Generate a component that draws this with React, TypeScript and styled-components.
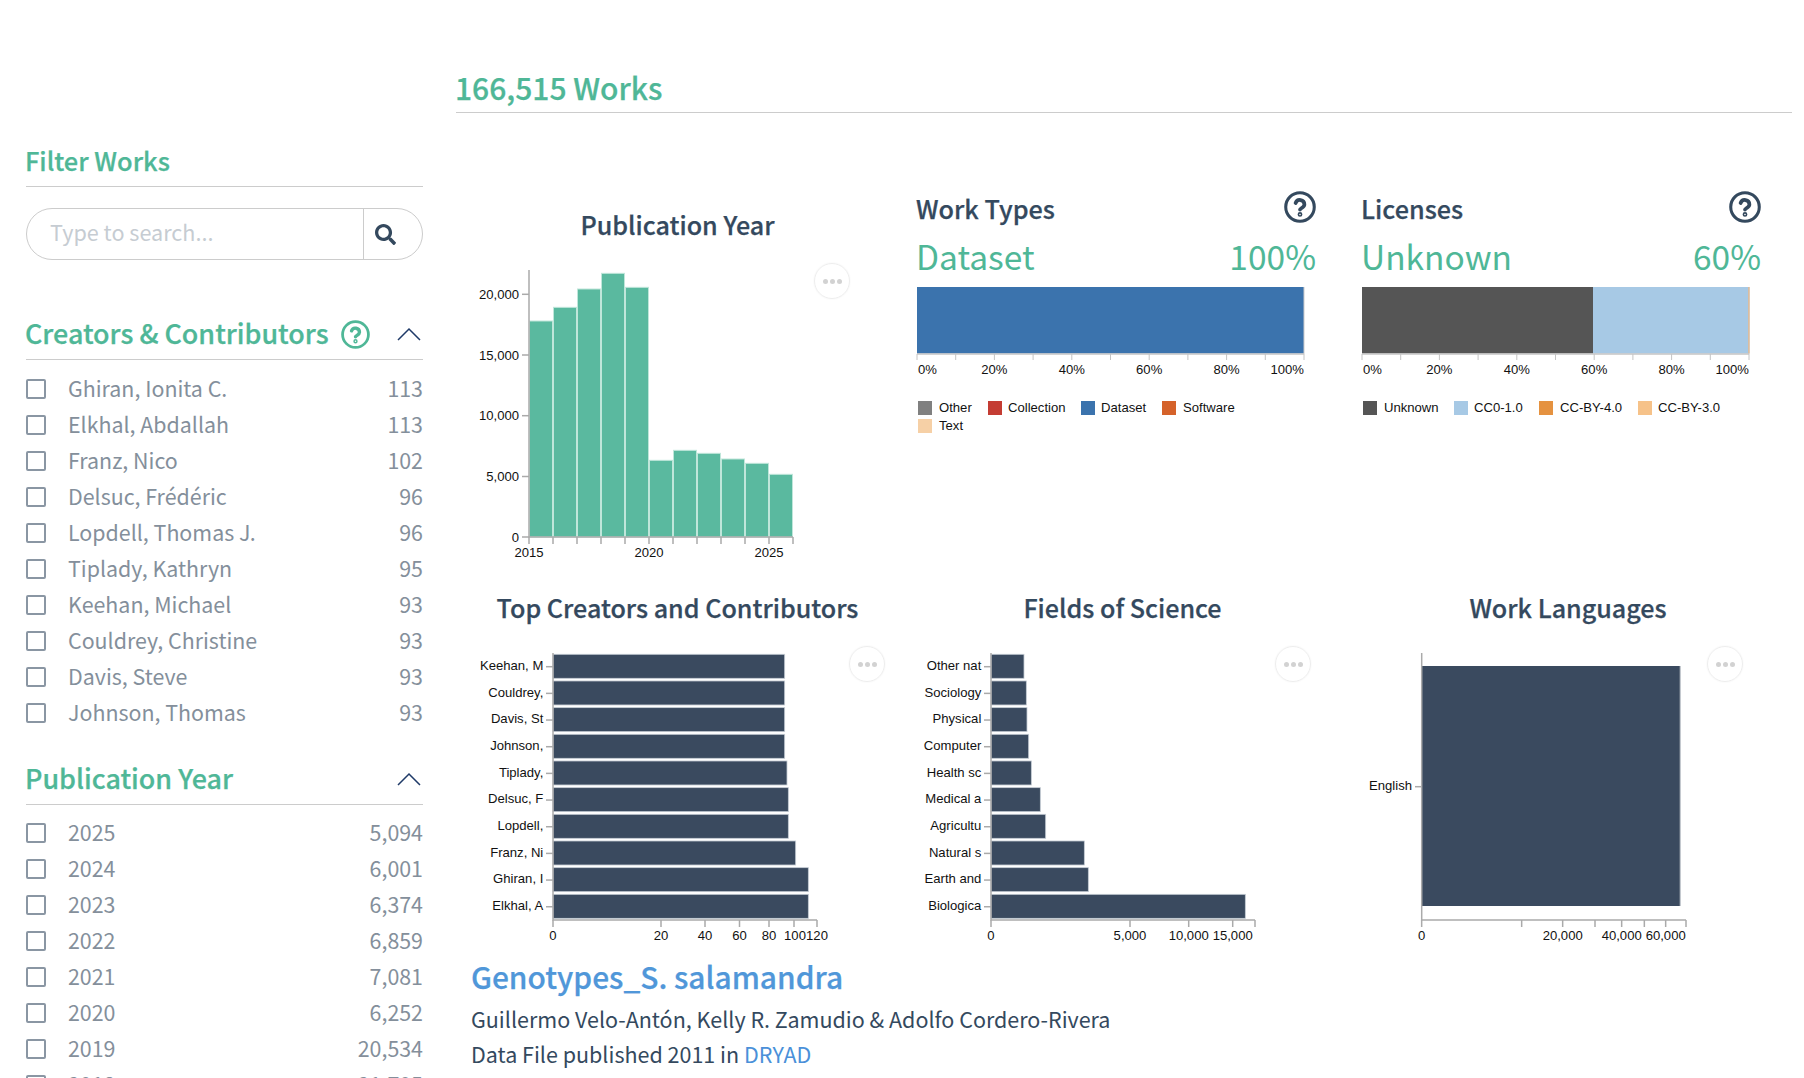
import React from "react";
import styled, { createGlobalStyle, css } from "styled-components";
import { FaSearch } from "react-icons/fa";

const FONT = `"Noto Sans CJK SC", "Noto Sans", sans-serif`;
const GREEN = "#4fb797";
const NAVY = "#34495e";
const BAR = "#3a4a5f";

const semibold = css`
  font-weight: 500;
  -webkit-text-stroke: 0.25px currentColor;
`;

const Global = createGlobalStyle`
  html, body { margin: 0; padding: 0; background: #fff; }
  body { font-family: ${FONT}; overflow: hidden; }
`;

const Page = styled.div`
  display: flex;
  width: 1804px;
  height: 1078px;
  overflow: hidden;
  box-sizing: border-box;
  padding: 0 12px 0 26px;
  gap: 33px;
`;
const Sidebar = styled.aside`
  width: 397px;
  flex: none;
  padding-top: 140px;
`;
const FilterTitle = styled.h2`
  margin: 0;
  height: 46px;
  line-height: 40px;
  font-size: 25.4px;
  ${semibold}
  text-indent: -1px;
  color: ${GREEN};
  border-bottom: 1px solid #ccc;
`;
const SearchBox = styled.div`
  display: flex;
  height: 52px;
  margin-top: 21px;
  box-sizing: border-box;
  border: 1px solid #ccc;
  border-radius: 26px;
`;
const SearchPlaceholder = styled.div`
  flex: 1;
  padding-left: 23px;
  line-height: 46px;
  font-size: 21.6px;
  color: #c6ccd2;
  border-right: 1px solid #ccc;
`;
const SearchButton = styled.div`
  width: 58px;
  display: flex;
  align-items: center;
  padding-left: 11px;
  box-sizing: border-box;
  color: ${NAVY};
  font-size: 21px;
`;
const FacetHeader = styled.div<{ $top: number }>`
  display: flex;
  align-items: center;
  height: 50px;
  margin-top: ${(p) => p.$top}px;
  border-bottom: 1px solid #ccc;
  color: ${GREEN};
`;
const FacetTitle = styled.h3`
  margin: 0;
  font-size: 26.9px;
  line-height: 38px;
  padding-bottom: 2px;
  ${semibold}
  text-indent: -1px;
  color: ${GREEN};
`;
const HelpWrap = styled.span<{ $size: number; $color: string }>`
  display: inline-flex;
  width: ${(p) => p.$size}px;
  height: ${(p) => p.$size}px;
  color: ${(p) => p.$color};
`;
const FacetHelp = styled.span`
  display: inline-flex;
  margin-left: 12px;
`;
const StatHelp = styled.span`
  display: inline-flex;
  margin-bottom: 4px;
`;
const Chevron = styled.svg`
  width: 24px;
  height: 14px;
  margin-left: auto;
  margin-right: 2px;
`;
const FacetList = styled.ul<{ $pad: number }>`
  list-style: none;
  margin: 0;
  padding: ${(p) => p.$pad}px 0 0;
`;
const FacetRow = styled.li`
  display: flex;
  align-items: center;
  height: 36px;
  font-size: 21.4px;
  color: #848f9b;
`;
const Check = styled.span`
  width: 20px;
  height: 20px;
  box-sizing: border-box;
  border: 2px solid #8a96a3;
  border-radius: 2px;
  flex: none;
  margin: 2px 22px 0 0;
`;
const FacetLabel = styled.span`
  margin-bottom: 2px;
`;
const FacetCount = styled.span`
  margin: 0 0 2px auto;
`;

const Main = styled.main`
  flex: 1;
  min-width: 0;
  padding-top: 68px;
`;
const WorksTitle = styled.h1`
  margin: 0;
  height: 44px;
  line-height: 38px;
  font-size: 30px;
  ${semibold}
  text-indent: -1px;
  color: ${GREEN};
  border-bottom: 1px solid #ccc;
`;
const ChartGrid = styled.div`
  display: grid;
  grid-template-columns: 445px 445px 446px;
  grid-template-rows: 400px 368px;
  margin-top: 77px;
`;
const Card = styled.section`
  position: relative;
  min-width: 0;
`;
const CenterTitle = styled.h4<{ $height: number; $top?: number }>`
  margin: 0;
  height: ${(p) => p.$height}px;
  padding: ${(p) => p.$top ?? 0}px 2px 0 0;
  box-sizing: border-box;
  line-height: 34px;
  font-size: 25.1px;
  ${semibold}
  text-align: center;
  color: ${NAVY};
`;
const StatHead = styled.div`
  display: flex;
  align-items: center;
  justify-content: space-between;
  width: 399px;
  height: 38px;
  margin-left: 16px;
`;
const StatTitle = styled.h4`
  margin: 0 0 0 -1px;
  line-height: 36px;
  padding-bottom: 2px;
  font-size: 25.2px;
  ${semibold}
  color: ${NAVY};
`;
const StatValue = styled.div`
  display: flex;
  justify-content: space-between;
  width: 400px;
  height: 52px;
  margin-left: 15px;
  line-height: 56px;
  font-size: 33.5px;
  font-weight: 400;
  color: ${GREEN};
`;
const Chart = styled.svg`
  display: block;
  text {
    font-family: "Liberation Sans", Arial, sans-serif;
    font-size: 13.1px;
    fill: #111;
  }
`;
const MoreButton = styled.div<{ $right: number; $top: number }>`
  position: absolute;
  right: ${(p) => p.$right}px;
  top: ${(p) => p.$top}px;
  width: 36px;
  height: 36px;
  box-sizing: border-box;
  border: 1px solid #eee;
  border-radius: 50%;
  box-shadow: 0 0 2px #f2f2f2;
  display: flex;
  align-items: center;
  justify-content: center;
  gap: 2px;
`;
const Dot = styled.span`
  width: 5px;
  height: 5px;
  border-radius: 50%;
  background: #d2d2d2;
`;
const Result = styled.article`
  margin-left: 15px;
  margin-top: -3px;
`;
const ResultTitle = styled.h2`
  margin: 0;
  height: 46px;
  line-height: 42px;
  font-size: 29.9px;
  ${semibold}
  color: #5097d9;
`;
const ResultLine = styled.p`
  margin: 0;
  height: 35px;
  line-height: 35px;
  font-size: 21.5px;
  color: ${NAVY};
`;
const ResultLink = styled.span`
  color: #4a90d9;
`;

const Help = ({ size, color }: { size: number; color: string }) => (
  <HelpWrap $size={size} $color={color}>
    <svg viewBox="0 0 24 24" width={size} height={size} fill="none" stroke="currentColor" strokeWidth={2.3} strokeLinecap="round" strokeLinejoin="round">
      <circle cx="12" cy="12" r="10.7" />
      <path d="M8.7 9a3.4 3.4 0 0 1 6.6 1.1c0 2.2-3.3 3-3.3 3.8" strokeWidth={2.8} />
      <circle cx="12" cy="17.6" r="0.6" strokeWidth={2.4} />
    </svg>
  </HelpWrap>
);
const More = ({ right, top }: { right: number; top: number }) => (
  <MoreButton $right={right} $top={top}>
    <Dot />
    <Dot />
    <Dot />
  </MoreButton>
);
const ChevronUp = () => (
  <Chevron viewBox="0 0 24 14" fill="none" stroke="#1f3a68" strokeWidth={1.5}>
    <path d="M1 13 L12 2 L23 13" />
  </Chevron>
);

const AXIS = "#aaa";

const PubYear = () => {
  const tops = [393, 352, 297, 250, 292, 811, 781, 790, 807, 820, 853].map((v) => 190 + v / 3);
  const ys: [string, number][] = [["0", 537], ["5,000", 476.5], ["10,000", 415.7], ["15,000", 355], ["20,000", 294.3]];
  const xt = Array.from({ length: 12 }, (_, i) => 529 + i * 24);
  return (
    <Chart viewBox="456 260 445 330" width={445} height={330}>
      {tops.map((t, i) => (
        <rect key={i} x={529.5 + i * 24} y={t} width={23} height={537 - t} fill="#5ab99f" stroke="#bfe6da" strokeWidth={1} />
      ))}
      <path d={`M529 270 V537 H793`} fill="none" stroke={AXIS} strokeWidth={1.5} />
      {ys.map(([l, y]) => (
        <g key={l}>
          <line x1={522} x2={529} y1={y} y2={y} stroke={AXIS} strokeWidth={1.5} />
          <text x={519} y={y + 4.5} textAnchor="end">{l}</text>
        </g>
      ))}
      {xt.map((x) => (
        <line key={x} x1={x} x2={x} y1={537} y2={544} stroke={AXIS} strokeWidth={1.5} />
      ))}
      {[["2015", 529], ["2020", 649], ["2025", 769]].map(([l, x]) => (
        <text key={l} x={x} y={557} textAnchor="middle">{l}</text>
      ))}
    </Chart>
  );
};

const Stacked = ({ x0, vb, segs, legend }: { x0: number; vb: number; segs: [number, number, string][]; legend: [string, string, number, number, number][] }) => {
  const ticks = Array.from({ length: 11 }, (_, i) => x0 + i * 38.7);
  return (
    <Chart viewBox={`${vb} 280 445 310`} width={445} height={310}>
      {segs.map(([a, b, c], i) => (
        <rect key={i} x={a} y={287} width={b - a} height={66.5} fill={c} />
      ))}
      <line x1={x0 + 387} x2={x0 + 387} y1={287} y2={354} stroke="#ccc" strokeWidth={1} />
      <line x1={x0} x2={x0 + 387} y1={354} y2={354} stroke="#c4c4c4" strokeWidth={1.5} />
      {ticks.map((x) => (
        <line key={x} x1={x} x2={x} y1={354} y2={360} stroke="#c4c4c4" strokeWidth={1} />
      ))}
      {[0, 20, 40, 60, 80, 100].map((p, i) => (
        <text key={p} x={x0 + (i === 0 ? 1 : p * 3.87)} y={374} textAnchor={i === 0 ? "start" : i === 5 ? "end" : "middle"}>{p}%</text>
      ))}
      {legend.map(([l, c, sx, tx, y]) => (
        <g key={l}>
          <rect x={sx} y={y - 6} width={14} height={14} fill={c} />
          <text x={tx} y={y + 4.5}>{l}</text>
        </g>
      ))}
    </Chart>
  );
};

const HBar = ({ vb, ax, labels, rights, ticks, tickLabels, endX }: { vb: number; ax: number; labels: string[]; rights: number[]; ticks: number[]; tickLabels: [string, number][]; endX: number }) => (
  <Chart viewBox={`${vb} 626 445 334`} width={445} height={334}>
    {rights.map((r, i) => (
      <rect key={i} x={ax} y={654.3 + i * 26.67} width={r - ax} height={24} fill={BAR} stroke="#c5ccd4" strokeWidth={0.8} />
    ))}
    <path d={`M${ax} 653 V920 H${endX}`} fill="none" stroke={AXIS} strokeWidth={1.5} />
    {labels.map((l, i) => (
      <g key={l}>
        <line x1={ax - 7} x2={ax} y1={666.7 + i * 26.67} y2={666.7 + i * 26.67} stroke={AXIS} strokeWidth={1.5} />
        <text x={ax - 9.7} y={670.1 + i * 26.67} textAnchor="end">{l}</text>
      </g>
    ))}
    {ticks.map((x) => (
      <line key={x} x1={x} x2={x} y1={920} y2={927} stroke={AXIS} strokeWidth={1.5} />
    ))}
    {tickLabels.map(([l, x]) => (
      <text key={l} x={x} y={940} textAnchor="middle">{l}</text>
    ))}
  </Chart>
);

const Languages = () => {
  const ticks = [215, 515, 638, 735, 815, 883, 947, 1008].map((v) => 1350 + v / 3);
  return (
    <Chart viewBox="1346 626 446 334" width={446} height={334}>
      <rect x={1421} y={666} width={259} height={240} fill={BAR} />
      <line x1={1680} x2={1680} y1={666} y2={906} stroke="#8a94a0" strokeWidth={1} />
      <path d={`M1421.7 653 V920 H1686`} fill="none" stroke={AXIS} strokeWidth={1.5} />
      <line x1={1415} x2={1421} y1={786.7} y2={786.7} stroke={AXIS} strokeWidth={1.5} />
      <text x={1412} y={790} textAnchor="end">English</text>
      {ticks.map((x) => (
        <line key={x} x1={x} x2={x} y1={920} y2={927} stroke={AXIS} strokeWidth={1.5} />
      ))}
      {[["0", 1421.7], ["20,000", 1562.7], ["40,000", 1621.7], ["60,000", 1665.7]].map(([l, x]) => (
        <text key={l as string} x={x} y={940} textAnchor="middle">{l}</text>
      ))}
    </Chart>
  );
};

const creators: [string, string][] = [
  ["Ghiran, Ionita C.", "113"], ["Elkhal, Abdallah", "113"], ["Franz, Nico", "102"], ["Delsuc, Frédéric", "96"],
  ["Lopdell, Thomas J.", "96"], ["Tiplady, Kathryn", "95"], ["Keehan, Michael", "93"], ["Couldrey, Christine", "93"],
  ["Davis, Steve", "93"], ["Johnson, Thomas", "93"],
];
const years: [string, string][] = [
  ["2025", "5,094"], ["2024", "6,001"], ["2023", "6,374"], ["2022", "6,859"], ["2021", "7,081"],
  ["2020", "6,252"], ["2019", "20,534"], ["2018", "21,705"],
];

const Rows = ({ items, pad }: { items: [string, string][]; pad: number }) => (
  <FacetList $pad={pad}>
    {items.map(([l, c]) => (
      <FacetRow key={l}>
        <Check />
        <FacetLabel>{l}</FacetLabel>
        <FacetCount>{c}</FacetCount>
      </FacetRow>
    ))}
  </FacetList>
);

export default function App() {
  return (
    <Page>
      <Global />
      <Sidebar>
        <FilterTitle>Filter Works</FilterTitle>
        <SearchBox>
          <SearchPlaceholder>Type to search...</SearchPlaceholder>
          <SearchButton><FaSearch /></SearchButton>
        </SearchBox>
        <FacetHeader $top={49}>
          <FacetTitle>Creators &amp; Contributors</FacetTitle>
          <FacetHelp><Help size={29} color={GREEN} /></FacetHelp>
          <ChevronUp />
        </FacetHeader>
        <Rows items={creators} pad={10} />
        <FacetHeader $top={24}>
          <FacetTitle>Publication Year</FacetTitle>
          <ChevronUp />
        </FacetHeader>
        <Rows items={years} pad={9} />
      </Sidebar>
      <Main>
        <WorksTitle>166,515 Works</WorksTitle>
        <ChartGrid>
          <Card>
            <CenterTitle $height={70} $top={17}>Publication Year</CenterTitle>
            <PubYear />
            <More right={51} top={73} />
          </Card>
          <Card>
            <StatHead>
              <StatTitle>Work Types</StatTitle>
              <StatHelp><Help size={32} color={NAVY} /></StatHelp>
            </StatHead>
            <StatValue><span>Dataset</span><span>100%</span></StatValue>
            <Stacked
              x0={917}
              vb={901}
              segs={[[917, 1304, "#3b73ad"]]}
              legend={[
                ["Other", "#808080", 918, 939, 407],
                ["Collection", "#c43c33", 988, 1008, 407],
                ["Dataset", "#3b73ad", 1081, 1101, 407],
                ["Software", "#d5622a", 1162, 1183, 407],
                ["Text", "#f6d0a6", 918, 939, 425],
              ]}
            />
          </Card>
          <Card>
            <StatHead>
              <StatTitle>Licenses</StatTitle>
              <StatHelp><Help size={32} color={NAVY} /></StatHelp>
            </StatHead>
            <StatValue><span>Unknown</span><span>60%</span></StatValue>
            <Stacked
              x0={1362}
              vb={1346}
              segs={[[1362, 1593, "#555555"], [1593, 1748.3, "#a7c9e5"], [1748.3, 1749.5, "#e59240"]]}
              legend={[
                ["Unknown", "#555555", 1363, 1384, 407],
                ["CC0-1.0", "#a7c9e5", 1454, 1474, 407],
                ["CC-BY-4.0", "#e59240", 1539, 1560, 407],
                ["CC-BY-3.0", "#f6c289", 1638, 1658, 407],
              ]}
            />
          </Card>
          <Card>
            <CenterTitle $height={36}>Top Creators and Contributors</CenterTitle>
            <HBar
              vb={456}
              ax={553}
              endX={817}
              labels={["Keehan, M", "Couldrey,", "Davis, St", "Johnson,", "Tiplady,", "Delsuc, F", "Lopdell,", "Franz, Ni", "Ghiran, I", "Elkhal, A"]}
              rights={[974, 974, 974, 974, 981, 985, 985, 1007, 1045, 1045].map((v) => 460 + v / 3)}
              ticks={[553, 661, 705, 739.5, 769, 794, 817]}
              tickLabels={[["0", 553], ["20", 661], ["40", 705], ["60", 739.5], ["80", 769], ["100", 795], ["120", 817]]}
            />
            <More right={16} top={56} />
          </Card>
          <Card>
            <CenterTitle $height={36}>Fields of Science</CenterTitle>
            <HBar
              vb={901}
              ax={991}
              endX={1255}
              labels={["Other nat", "Sociology", "Physical", "Computer", "Health sc", "Medical a", "Agricultu", "Natural s", "Earth and", "Biologica"]}
              rights={[372, 379, 381, 386, 394, 421, 437, 553, 565, 1036].map((v) => 900 + v / 3)}
              ticks={[991, 1130, 1188.7, 1232.7, 1255]}
              tickLabels={[["0", 991], ["5,000", 1130], ["10,000", 1188.7], ["15,000", 1232.7]]}
            />
            <More right={35} top={56} />
          </Card>
          <Card>
            <CenterTitle $height={36}>Work Languages</CenterTitle>
            <Languages />
            <More right={49} top={56} />
          </Card>
        </ChartGrid>
        <Result>
          <ResultTitle>Genotypes_S. salamandra</ResultTitle>
          <ResultLine>Guillermo Velo-Antón, Kelly R. Zamudio &amp; Adolfo Cordero-Rivera</ResultLine>
          <ResultLine>Data File published 2011 in <ResultLink>DRYAD</ResultLink></ResultLine>
        </Result>
      </Main>
    </Page>
  );
}
